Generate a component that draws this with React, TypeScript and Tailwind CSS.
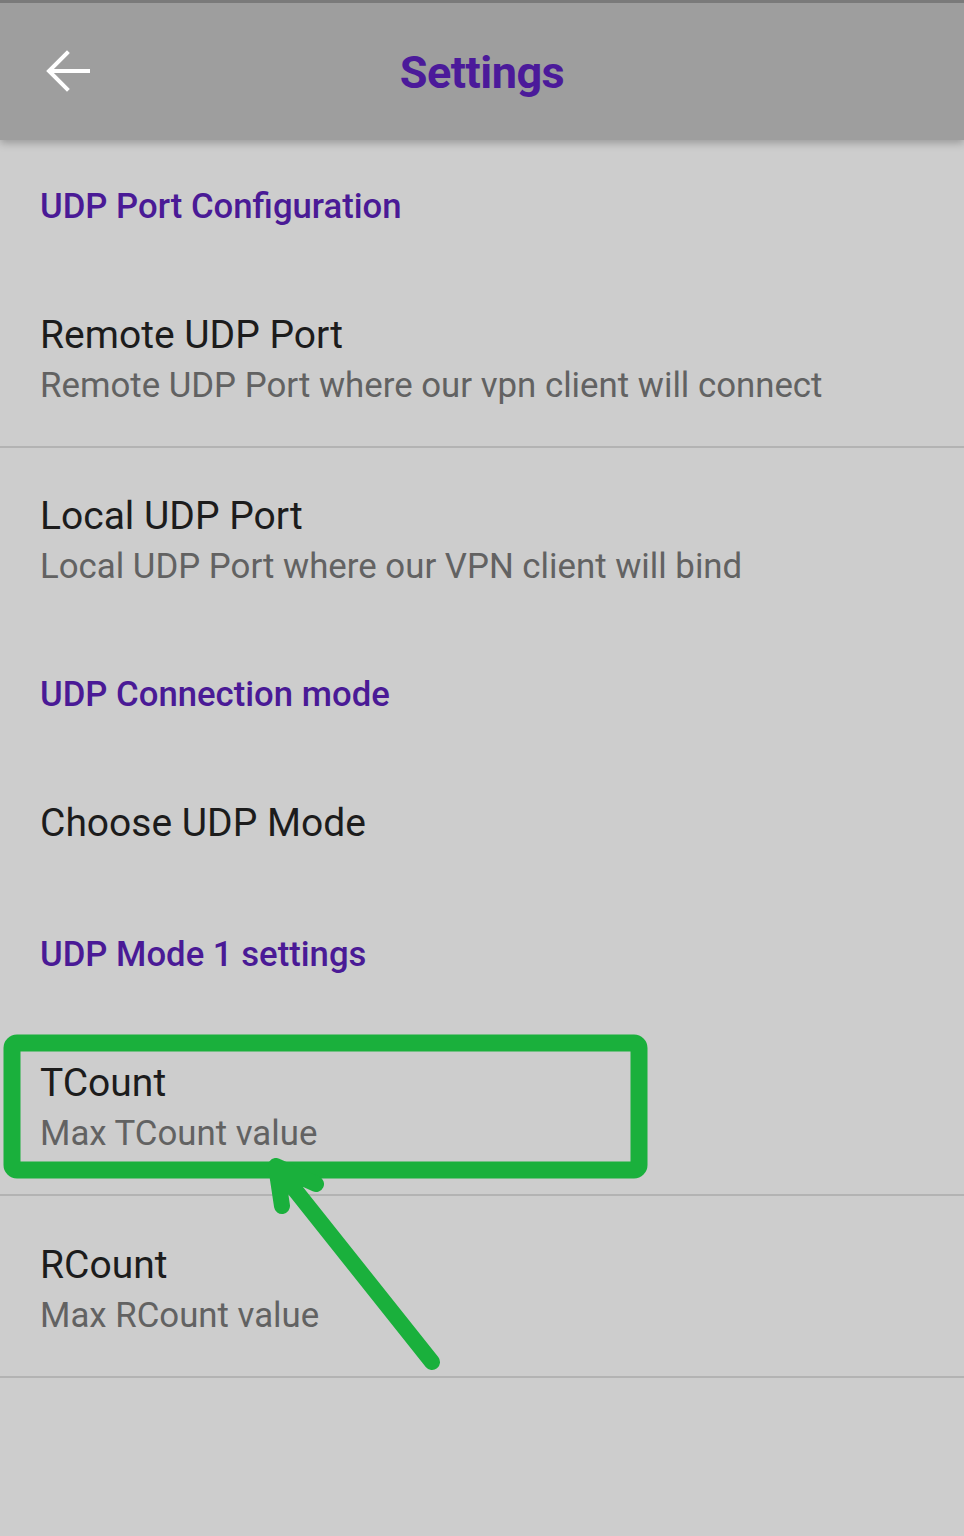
import React from "react";

const font = { fontFamily: "Roboto, 'Noto Sans', Arial, sans-serif" };

function Category({ label, className }: { label: string; className: string }) {
  return (
    <div className={className}>
      <div className="px-[40px] text-[34.7px] leading-[40px] font-medium text-[#4a1a96]">{label}</div>
    </div>
  );
}

function Pref({ title, summary, className }: { title: string; summary?: string; className: string }) {
  return (
    <div className={className}>
      <div className="px-[40px]">
        <div className="text-[39px] leading-[50px] text-[#1c1c1c]">{title}</div>
        {summary && <div className="text-[34.8px] leading-[50px] text-[#626262]">{summary}</div>}
      </div>
    </div>
  );
}

function Divider() {
  return <div className="h-[2px] bg-[#b3b3b3]" />;
}

export default function App() {
  return (
    <div className="relative w-[964px] h-[1536px] overflow-hidden bg-[#cdcdcd]" style={font}>
      <header className="relative z-10 h-[140px] border-t-[3px] border-[#7a7a7a] bg-[#9e9e9e] shadow-[0_3px_8px_rgba(0,0,0,0.25)] flex items-center">
        <svg width="64" height="48" viewBox="0 0 64 48" className="ml-[36px] mt-[-2px]">
          <path d="M52 24H14M31 6L13 24L31 42" fill="none" stroke="#ffffff" strokeWidth="4" strokeLinecap="square" />
        </svg>
        <h1 className="absolute left-0 right-0 mt-[2px] text-center text-[45px] font-bold text-[#4b1a9a] tracking-[-0.5px]">
          Settings
        </h1>
      </header>

      <Category label="UDP Port Configuration" className="h-[134px] pt-[46px]" />
      <Pref
        title="Remote UDP Port"
        summary="Remote UDP Port where our vpn client will connect"
        className="h-[172px] pt-[36px]"
      />
      <Divider />
      <Pref
        title="Local UDP Port"
        summary="Local UDP Port where our VPN client will bind"
        className="h-[179px] pt-[43px]"
      />
      <Category label="UDP Connection mode" className="h-[136px] pt-[47px]" />
      <Pref title="Choose UDP Mode" className="h-[123px] pt-[35px]" />
      <Category label="UDP Mode 1 settings" className="h-[136px] pt-[48px]" />
      <Pref title="TCount" summary="Max TCount value" className="h-[172px] pt-[36px]" />
      <Divider />
      <Pref title="RCount" summary="Max RCount value" className="h-[180px] pt-[44px]" />
      <Divider />

      <svg className="absolute left-0 top-0 pointer-events-none" width="964" height="1536" viewBox="0 0 964 1536">
        <rect x="12" y="1043" width="627" height="127" rx="5" fill="none" stroke="#1ab03c" strokeWidth="17" />
        <path
          d="M432 1362L276 1166M282 1206L276 1166L316 1184"
          fill="none"
          stroke="#1ab03c"
          strokeWidth="16"
          strokeLinecap="round"
          strokeLinejoin="round"
        />
      </svg>
    </div>
  );
}
